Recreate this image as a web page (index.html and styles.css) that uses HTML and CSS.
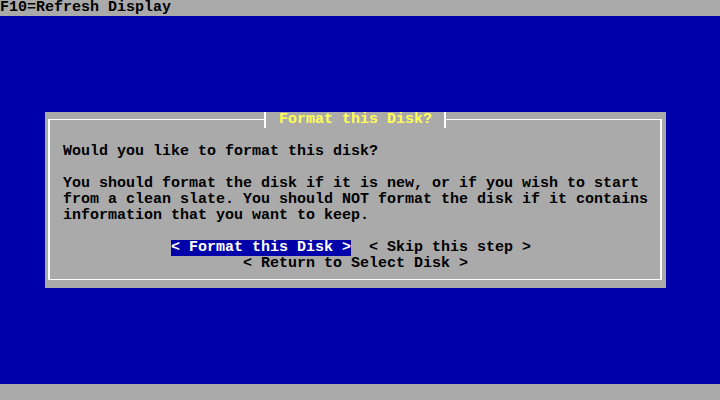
FILE: index.html
```html
<!DOCTYPE html>
<html>
<head>
<meta charset="utf-8">
<link rel="stylesheet" href="styles.css">
</head>
<body>
<div class="topbar">F10=Refresh Display</div>
<div class="screen">
  <div class="dialog">
    <div class="frame-top">
      <div class="edge edge-left"></div>
      <div class="title">Format this Disk?</div>
      <div class="edge edge-right"></div>
    </div>
    <div class="frame-body">
      <p class="line">Would you like to format this disk?</p>
      <p class="para">You should format the disk if it is new, or if you wish to start<br>from a clean slate. You should NOT format the disk if it contains<br>information that you want to keep.</p>
      <div class="buttons">
        <div class="btn-row row-one"><span class="btn btn-active">&lt; Format this Disk &gt;</span><span class="btn btn-gap">&lt; Skip this step &gt;</span></div>
        <div class="btn-row row-two"><span class="btn">&lt; Return to Select Disk &gt;</span></div>
      </div>
    </div>
  </div>
</div>
<div class="bottombar"></div>
</body>
</html>
```
FILE: styles.css
```css
* { box-sizing: border-box; }
html, body { margin: 0; padding: 0; }
body {
  width: 720px;
  height: 400px;
  overflow: hidden;
  background: #0000aa;
  display: flex;
  flex-direction: column;
  font-family: "Liberation Mono", "DejaVu Sans Mono", monospace;
  font-weight: bold;
  font-size: 15px;
  line-height: 16px;
}
.topbar {
  height: 16px;
  flex: none;
  background: #aaaaaa;
  color: #000000;
  white-space: pre;
}
.screen {
  flex: 1;
  padding-top: 96px;
  padding-left: 45px;
}
.dialog {
  width: 621px;
  height: 176px;
  background: #aaaaaa;
  padding: 0 4px 8px 3px;
  color: #000000;
}
.frame-top {
  display: flex;
  height: 16px;
}
.edge {
  flex: 1;
  margin-top: 7px;
  height: 9px;
  border-top: 1px solid #ffffff;
}
.edge-left { border-left: 2px solid #ffffff; }
.edge-right { border-right: 2px solid #ffffff; }
.title {
  color: #ffff55;
  border-left: 2px solid #ffffff;
  border-right: 2px solid #ffffff;
  padding: 0 12px 0 13px;
  white-space: pre;
}
.frame-body {
  height: 152px;
  border-left: 2px solid #ffffff;
  border-right: 2px solid #ffffff;
  border-bottom: 1px solid #ffffff;
  padding: 16px 0 7px 13px;
  white-space: nowrap;
}
.line, .para {
  margin: 0 0 16px 0;
}
.btn-row { height: 16px; }
.row-one { padding-left: 108px; }
.row-two { padding-left: 180px; }
.btn { display: inline-block; height: 16px; white-space: pre; }
.btn-active {
  background: #0000aa;
  color: #ffffff;
}
.btn-gap { margin-left: 18px; }
.bottombar {
  height: 16px;
  flex: none;
  background: #aaaaaa;
}
```
